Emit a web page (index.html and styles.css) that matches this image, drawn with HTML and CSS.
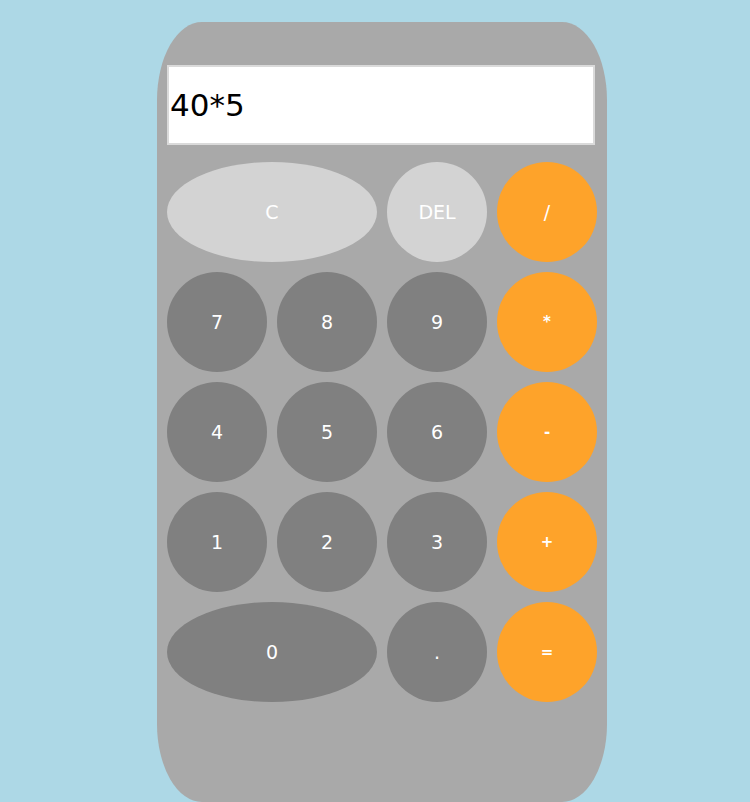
FILE: index.html
```html
<!DOCTYPE html>
<html>
<head>
<meta charset="utf-8">
<link rel="stylesheet" href="styles.css">
</head>
<body>
<div class="calc">
  <div class="display">40*5</div>
  <div class="keys">
    <div class="key light wide">C</div>
    <div class="key light">DEL</div>
    <div class="key op">/</div>
    <div class="key">7</div>
    <div class="key">8</div>
    <div class="key">9</div>
    <div class="key op small">*</div>
    <div class="key">4</div>
    <div class="key">5</div>
    <div class="key">6</div>
    <div class="key op small">-</div>
    <div class="key">1</div>
    <div class="key">2</div>
    <div class="key">3</div>
    <div class="key op small">+</div>
    <div class="key wide">0</div>
    <div class="key">.</div>
    <div class="key op small">=</div>
  </div>
</div>
</body>
</html>
```
FILE: styles.css
```css
html, body {
  margin: 0;
  padding: 0;
}
body {
  background: #add8e6;
  height: 802px;
  overflow: hidden;
  font-family: "DejaVu Sans", sans-serif;
}
.calc {
  box-sizing: border-box;
  width: 450px;
  height: 780px;
  margin: 22px 0 0 157px;
  background: #a9a9a9;
  border-radius: 10%;
  padding: 43px 10px 0 10px;
}
.display {
  box-sizing: border-box;
  width: 428px;
  height: 80px;
  background: #fff;
  border: 2px solid #dadada;
  font-size: 31px;
  color: #000;
  display: flex;
  align-items: center;
  padding-left: 1px;
}
.keys {
  margin-top: 17px;
  display: grid;
  grid-template-columns: repeat(4, 100px);
  grid-auto-rows: 100px;
  gap: 10px;
}
.key {
  border-radius: 50%;
  background: #808080;
  color: #fff;
  font-size: 19px;
  display: flex;
  align-items: center;
  justify-content: center;
}
.key.wide {
  grid-column: span 2;
}
.key.light {
  background: #d3d3d3;
}
.key.op {
  background: #fea32a;
}
.key.small {
  font-size: 15px;
  font-weight: bold;
}
```
